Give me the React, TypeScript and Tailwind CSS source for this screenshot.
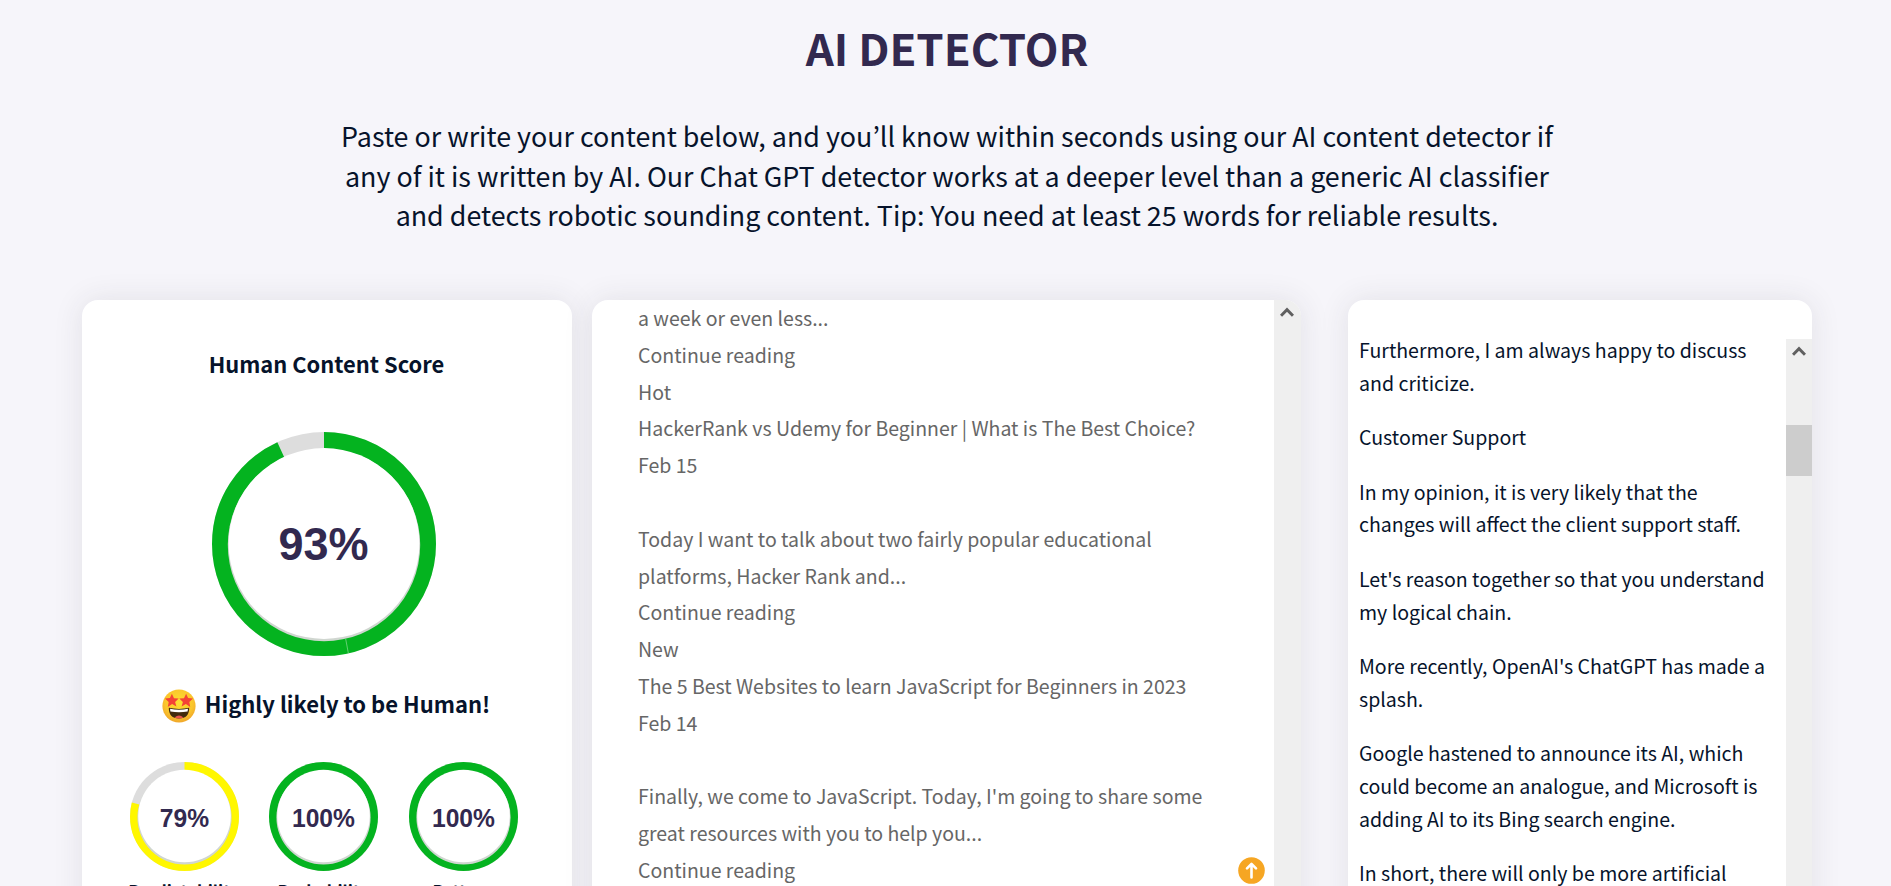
const SANS = "font-['Noto_Sans_CJK_KR','Noto_Sans',sans-serif]";

type GaugeProps = {
  size: number;
  thickness: number;
  value: number;
  color: string;
  label: string;
  labelClass: string;
  seam?: boolean;
};

function Gauge({ size, thickness, value, color, label, labelClass, seam }: GaugeProps) {
  const r = size / 2;
  const mid = r / 2;
  const circ = 2 * Math.PI * mid;
  return (
    <div className="grid place-items-center" style={{ width: size, height: size }}>
      <svg className="col-start-1 row-start-1" width={size} height={size} viewBox={`0 0 ${size} ${size}`}>
        <circle cx={r} cy={r} r={r} fill="#dddddd" />
        {value >= 100 ? (
          <circle cx={r} cy={r} r={r} fill={color} />
        ) : (
          <circle
            cx={r}
            cy={r}
            r={mid}
            fill="none"
            stroke={color}
            strokeWidth={r}
            strokeDasharray={`${(circ * value) / 100} ${circ}`}
            transform={`rotate(-90 ${r} ${r})`}
          />
        )}
        {seam && <path d="M133.7 207 L136.3 221" stroke="#7bd586" strokeWidth="0.8" />}
        <circle cx={r} cy={r + 1} r={r - thickness + 0.8} fill="#d0d6d0" />
        <circle cx={r} cy={r - 0.5} r={r - thickness} fill="#ffffff" />
      </svg>
      <span className={`col-start-1 row-start-1 scale-x-[0.97] font-['Liberation_Sans',Arial,sans-serif] font-bold text-[#32294f] ${labelClass}`}>
        {label}
      </span>
    </div>
  );
}

function StarEyes() {
  return (
    <svg className="mt-[1px] h-[34px] w-[34px] shrink-0" viewBox="0 0 34 34">
      <defs>
        <radialGradient id="face" cx="50%" cy="40%" r="60%">
          <stop offset="0" stopColor="#fde030" />
          <stop offset="0.7" stopColor="#fac52c" />
          <stop offset="1" stopColor="#f0a62b" />
        </radialGradient>
      </defs>
      <circle cx="17" cy="17" r="16.6" fill="url(#face)" />
      <path d="M6.8 18.8 Q17 21 27.2 18.8 Q27.4 29.4 17 29.6 Q6.6 29.4 6.8 18.8Z" fill="#422b0d" />
      <path d="M8 19.8 Q17 21.6 26 19.8 L25.6 22.6 Q17 24 8.4 22.6Z" fill="#fff" />
      <path d="M12.6 28.6 Q17 24.4 21.4 28.6 Q17 30.4 12.6 28.6Z" fill="#e8544f" />
      <path d="M9.9 4.8l2.1 4.4 4.7.4-3.6 3.3 1.3 4.7-4.3-2.5-4.3 2.8.9-4.9-3.7-3.5 4.9-.5z" fill="#f44336" />
      <path d="M24.1 4.8l2 4.2 4.9.5-3.7 3.5.9 4.9-4.3-2.8-4.3 2.5 1.3-4.7-3.6-3.3 4.7-.4z" fill="#f44336" />
    </svg>
  );
}

function ScrollUp({ className }: { className: string }) {
  return (
    <svg className={className} width="14" height="12" viewBox="0 0 14 12">
      <path d="M1 9.8 L7 3.6 L13 9.8" fill="none" stroke="#606060" strokeWidth="3" />
    </svg>
  );
}

const feed = [
  "a week or even less...",
  "Continue reading",
  "Hot",
  "HackerRank vs Udemy for Beginner | What is The Best Choice?",
  "Feb 15",
  "",
  "Today I want to talk about two fairly popular educational",
  "platforms, Hacker Rank and...",
  "Continue reading",
  "New",
  "The 5 Best Websites to learn JavaScript for Beginners in 2023",
  "Feb 14",
  "",
  "Finally, we come to JavaScript. Today, I'm going to share some",
  "great resources with you to help you...",
  "Continue reading",
];

const article = [
  ["Furthermore, I am always happy to discuss", "and criticize."],
  ["Customer Support"],
  ["In my opinion, it is very likely that the", "changes will affect the client support staff."],
  ["Let's reason together so that you understand", "my logical chain."],
  ["More recently, OpenAI's ChatGPT has made a", "splash."],
  ["Google hastened to announce its AI, which", "could become an analogue, and Microsoft is", "adding AI to its Bing search engine."],
  ["In short, there will only be more artificial"],
];

const metrics = [
  { value: 79, color: "#fff700", name: "Predictability" },
  { value: 100, color: "#04b31f", name: "Probability" },
  { value: 100, color: "#04b31f", name: "Pattern" },
];

const card = "h-[700px] rounded-t-2xl bg-white shadow-[0_0_30px_rgba(50,45,55,0.1)]";

export default function App() {
  return (
    <div className={`flex h-[886px] w-[1891px] flex-col overflow-hidden bg-[#f6f5fa] text-[#06132b] ${SANS}`}>
      <header className="flex h-[300px] shrink-0 flex-col items-center pl-[3px] text-center">
        <h1 className="mt-[17px] text-[43.8px] leading-[60px] font-bold text-[#32294f]">AI DETECTOR</h1>
        <div className="mt-[39px] text-[26.85px] leading-[39.6px] whitespace-nowrap">
          <p>Paste or write your content below, and you’ll know within seconds using our AI content detector if</p>
          <p>any of it is written by AI. Our Chat GPT detector works at a deeper level than a generic AI classifier</p>
          <p>and detects robotic sounding content. Tip: You need at least 25 words for reliable results.</p>
        </div>
      </header>

      <main className="flex shrink-0 pl-[82px]">
        <section className={`flex w-[490px] flex-col items-center pr-[7px] ${card}`}>
          <h2 className="mt-[47px] pl-[6px] text-[21.9px] leading-[34px] font-bold">Human Content Score</h2>
          <div className="mt-[51px]">
            <Gauge size={224} thickness={16.6} value={93} color="#04b31f" label="93%" labelClass="pt-[2px] pr-[1px] text-[46.4px]" seam />
          </div>
          <div className="mt-[31px] flex h-[36px] items-center gap-[9px] pl-[5px]">
            <StarEyes />
            <span className="-mt-[5px] text-[22px] leading-[34px] font-bold">Highly likely to be Human!</span>
          </div>
          <div className="mt-[39px] flex gap-[30.5px]">
            {metrics.map((m) => (
              <div key={m.name} className="flex w-[109px] flex-col items-center">
                <Gauge size={109} thickness={8.2} value={m.value} color={m.color} label={`${m.value}%`} labelClass="pt-[4px] text-[25.4px]" />
                <span className="mt-[7px] text-[16.7px] leading-[26px] font-bold">{m.name}</span>
              </div>
            ))}
          </div>
        </section>

        <section className={`relative ml-[20px] flex w-[709px] overflow-hidden ${card}`}>
          <div className="flex-1 pl-[46px] text-[19.53px] leading-[36.81px] whitespace-nowrap text-[#666666]">
            {feed.map((line, i) => (
              <p key={i} className="h-[36.81px]">{line}</p>
            ))}
          </div>
          <div className="flex w-[27px] justify-center bg-[#efefef] pr-[2px]">
            <ScrollUp className="mt-[6px]" />
          </div>
          <svg className="absolute top-[557px] left-[646px]" width="27" height="27" viewBox="0 0 27 27">
            <circle cx="13.5" cy="13.5" r="13.3" fill="#f6a623" />
            <path d="M13.5 20.5V7.5M9 11.3L13.5 6.8L18 11.3" fill="none" stroke="#fff" strokeWidth="2.6" strokeLinecap="round" strokeLinejoin="round" />
          </svg>
        </section>

        <section className={`ml-[47px] flex w-[464px] ${card}`}>
          <div className="flex flex-1 flex-col gap-[21.6px] pt-[34px] pl-[11px] text-[19.56px] leading-[32.8px] whitespace-nowrap">
            {article.map((lines, i) => (
              <div key={i}>
                {lines.map((line) => (
                  <p key={line}>{line}</p>
                ))}
              </div>
            ))}
          </div>
          <div className="mt-[39px] flex w-[26px] flex-col items-center bg-[#efefef]">
            <ScrollUp className="mt-[6px]" />
            <div className="mt-[68px] h-[51px] w-full bg-[#cdcdcd]" />
          </div>
        </section>
      </main>
    </div>
  );
}
